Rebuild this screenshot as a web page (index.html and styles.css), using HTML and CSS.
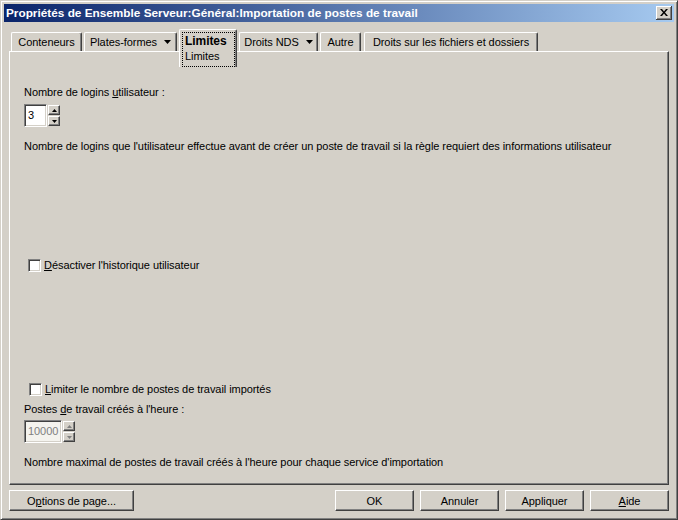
FILE: index.html
```html
<!DOCTYPE html>
<html lang="fr">
	<head>
		<meta charset="UTF-8">
		<title>Propriétés de Ensemble Serveur</title>
		<link rel="stylesheet" href="styles.css">
	</head>
	<body>
		<div class="window">
			<div class="titlebar">
				<span class="title">Propriétés de Ensemble Serveur:Général:Importation de postes de travail</span>
				<div class="close-btn">
					<svg width="8" height="7" viewBox="0 0 8 7"><path d="M0 0h2l2 2.5 2-2.5h2l-3 3.5 3 3.5h-2l-2-2.5-2 2.5h-2l3-3.5z" fill="#000"/></svg>
				</div>
			</div>

			<div class="dialog">
				<ul class="tabs">
					<li class="tab tab-cont">Conteneurs</li>
					<li class="tab tab-plat">Plates-formes <svg class="drop" width="7" height="4" viewBox="0 0 7 4"><path d="M0 0h7l-3.5 4z" fill="#000"/></svg></li>
					<li class="tab act">
						<div class="focus">
							<b>Limites</b>
							<span>Limites</span>
						</div>
					</li>
					<li class="tab tab-nds">Droits NDS <svg class="drop" width="7" height="4" viewBox="0 0 7 4"><path d="M0 0h7l-3.5 4z" fill="#000"/></svg></li>
					<li class="tab tab-autre">Autre</li>
					<li class="tab tab-files">Droits sur les fichiers et dossiers</li>
				</ul>

				<div class="panel">
					<p class="label first">Nombre de logins <u>u</u>tilisateur :</p>
					<div class="spin">
						<div class="field">3</div>
						<div class="spin-btns">
							<div class="spin-btn"><svg width="5" height="3" viewBox="0 0 5 3"><path d="M2.5 0l2.5 3h-5z" fill="#000"/></svg></div>
							<div class="spin-btn"><svg width="5" height="3" viewBox="0 0 5 3"><path d="M0 0h5l-2.5 3z" fill="#000"/></svg></div>
						</div>
					</div>
					<p class="desc">Nombre de logins que l'utilisateur effectue avant de créer un poste de travail si la règle requiert des informations utilisateur</p>

					<div class="check check-hist">
						<span class="box"></span>
						<span><u>D</u>ésactiver l'historique utilisateur</span>
					</div>

					<div class="check check-limit">
						<span class="box"></span>
						<span><u>L</u>imiter le nombre de postes de travail importés</span>
					</div>
					<p class="label second">Postes <u>d</u>e travail créés à l'heure :</p>
					<div class="spin disabled">
						<div class="field wide">10000</div>
						<div class="spin-btns">
							<div class="spin-btn"><svg width="5" height="3" viewBox="0 0 5 3"><path d="M2.5 0l2.5 3h-5z" fill="#808080"/></svg></div>
							<div class="spin-btn"><svg width="5" height="3" viewBox="0 0 5 3"><path d="M0 0h5l-2.5 3z" fill="#808080"/></svg></div>
						</div>
					</div>
					<p class="desc">Nombre maximal de postes de travail créés à l'heure pour chaque service d'importation</p>
				</div>

				<div class="buttons">
					<button class="btn btn-page">O<u>p</u>tions de page...</button>
					<div class="btn-group">
						<button class="btn">OK</button>
						<button class="btn">Annuler</button>
						<button class="btn">Appliquer</button>
						<button class="btn"><u>A</u>ide</button>
					</div>
				</div>
			</div>
		</div>
	</body>
</html>
```

FILE: styles.css
```css
*{
	margin: 0;
	padding: 0;
	box-sizing: border-box;
}
body{
	width: 678px;
	height: 520px;
	font-family: "Liberation Sans", Arial, sans-serif;
	font-size: 11px;
	line-height: 13px;
	letter-spacing: -0.06px;
	color: #000;
	background-color: #d4d0c8;
}
u{
	text-decoration: underline;
	text-underline-offset: 1px;
}

/* window frame */
.window{
	display: flex;
	flex-direction: column;
	width: 678px;
	height: 520px;
	padding: 3px;
	background-color: #d4d0c8;
	border-top: 1px solid #d4d0c8;
	border-left: 1px solid #d4d0c8;
	border-right: 1px solid #404040;
	border-bottom: 1px solid #404040;
	box-shadow: inset 1px 1px #fff, inset -1px -1px #808080;
}
.titlebar{
	display: flex;
	align-items: center;
	justify-content: space-between;
	height: 18px;
	padding: 0 2px 0 2px;
	background: linear-gradient(to right, #0a246a, #a6caf0);
}
.title{
	color: #fff;
	font-weight: bold;
	font-size: 11.8px;
	letter-spacing: 0;
	white-space: nowrap;
}
.close-btn{
	display: flex;
	align-items: center;
	justify-content: center;
	width: 16px;
	height: 14px;
	background-color: #d4d0c8;
	border-right: 1px solid #404040;
	border-bottom: 1px solid #404040;
	box-shadow: inset 1px 1px #fff, inset -1px -1px #808080;
}

/* dialog */
.dialog{
	display: flex;
	flex: 1;
	flex-direction: column;
	padding: 7px 5px 5px 5px;
}

.tabs{
	display: flex;
	gap: 2px;
	height: 22px;
	padding-left: 2px;
	list-style: none;
}
.tab{
	display: flex;
	align-items: center;
	justify-content: center;
	gap: 7px;
	height: 19px;
	margin-top: 3px;
	white-space: nowrap;
	background-color: #d4d0c8;
	border-top: 1px solid #fff;
	border-left: 1px solid #fff;
	border-right: 1px solid #404040;
	border-radius: 2px 2px 0 0;
	box-shadow: inset -1px 0 #808080;
}
.tab-cont{
	width: 71px;
}
.tab-plat{
	width: 93px;
}
.tab-nds{
	width: 79px;
}
.tab-autre{
	width: 41px;
}
.tab-files{
	width: 174px;
	margin-left: 1px;
}
.tab.act{
	position: relative;
	z-index: 1;
	align-items: flex-start;
	width: 58px;
	height: 38px;
	margin-top: 0;
	padding: 2px 1px 0 2px;
}
.focus{
	display: flex;
	flex-direction: column;
	width: 100%;
	padding: 1px 2px 2px 2px;
	border: 1px dotted #000;
}
.focus b{
	font-size: 12px;
	line-height: 15px;
}
.focus span{
	line-height: 15px;
}

/* panel */
.panel{
	flex: 1;
	padding: 0 14px;
	border-top: 1px solid #fff;
	border-left: 1px solid #fff;
	border-right: 1px solid #404040;
	border-bottom: 1px solid #404040;
	box-shadow: inset -1px -1px #808080;
}
.label.first{
	margin-top: 34px;
}
.label.second{
	margin-top: 7px;
}
.spin{
	display: flex;
	gap: 1px;
	margin-top: 5px;
}
.disabled{
	margin-top: 4px;
	color: #808080;
}
.field{
	width: 23px;
	height: 23px;
	padding: 4px 0 0 3px;
	background-color: #fff;
	border-top: 1px solid #808080;
	border-left: 1px solid #808080;
	border-right: 1px solid #fff;
	border-bottom: 1px solid #fff;
	box-shadow: inset 1px 1px #404040, inset -1px -1px #d4d0c8;
}
.field.wide{
	width: 38px;
	background-color: #f4f3ee;
}
.spin-btns{
	display: flex;
	flex-direction: column;
	gap: 1px;
	padding-top: 1px;
}
.spin-btn{
	display: flex;
	align-items: center;
	justify-content: center;
	width: 12px;
	height: 10px;
	background-color: #d4d0c8;
	border-top: 1px solid #fff;
	border-left: 1px solid #fff;
	border-right: 1px solid #404040;
	border-bottom: 1px solid #404040;
	box-shadow: inset -1px -1px #808080;
}
.desc{
	margin-top: 13px;
	white-space: nowrap;
}

.check{
	display: flex;
	align-items: center;
	gap: 3px;
	padding-left: 4px;
}
.check-hist{
	margin-top: 106px;
}
.check-limit{
	margin-top: 111px;
	padding-left: 5px;
}
.box{
	width: 13px;
	height: 13px;
	background-color: #fff;
	border-top: 1px solid #808080;
	border-left: 1px solid #808080;
	border-right: 1px solid #fff;
	border-bottom: 1px solid #fff;
	box-shadow: inset 1px 1px #404040, inset -1px -1px #d4d0c8;
}

/* bottom buttons */
.buttons{
	display: flex;
	justify-content: space-between;
	margin-top: 5px;
}
.btn-group{
	display: flex;
	gap: 6px;
}
.btn{
	width: 79px;
	height: 21px;
	font-family: inherit;
	font-size: 11px;
	letter-spacing: -0.06px;
	color: #000;
	background-color: #d4d0c8;
	border-top: 1px solid #fff;
	border-left: 1px solid #fff;
	border-right: 1px solid #404040;
	border-bottom: 1px solid #404040;
	box-shadow: inset -1px -1px #808080;
	outline: none;
}
.btn-page{
	width: 125px;
}
```
